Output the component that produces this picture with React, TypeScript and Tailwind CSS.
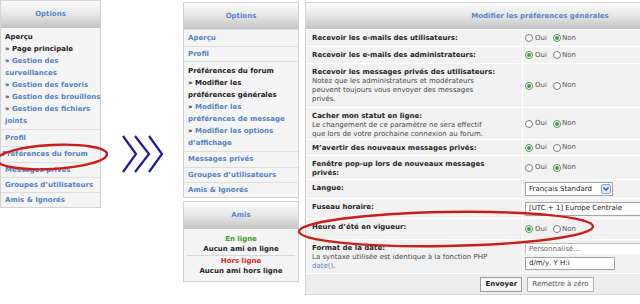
const FONT = "font-['DejaVu_Sans',Verdana,sans-serif]"

const Header = ({ title, className = '' }: { title: string; className?: string }) => (
  <div
    className={`flex items-center justify-center bg-linear-to-b from-[#fbfbfb] via-[#e6e6e6] to-[#c3c3c3] text-[7px] font-bold text-[#5a86c5] ${className}`}
  >
    {title}
  </div>
)

const Radio = ({ checked, className = '' }: { checked?: boolean; className?: string }) => (
  <span
    className={`inline-flex h-[8px] w-[8px] shrink-0 items-center justify-center rounded-full border bg-white ${
      checked ? 'border-[#5c8f5c]' : 'border-[#7d7d7d]'
    } ${className}`}
  >
    {checked && <span className="h-[4px] w-[4px] rounded-full bg-[#3f9f3f]" />}
  </span>
)

const YesNo = ({ yes }: { yes: boolean }) => (
  <div className="flex items-center text-[7px] text-[#555]">
    <Radio checked={yes} />
    <span className="ml-[2px]">Oui</span>
    <Radio checked={!yes} className="ml-[6px]" />
    <span className="ml-[1px]">Non</span>
  </div>
)

const Row = ({
  h,
  label,
  desc,
  children,
}: {
  h: string
  label: string
  desc?: React.ReactNode
  children?: React.ReactNode
}) => (
  <div className={`flex gap-[1px] ${h}`}>
    <div className="w-[216px] shrink-0 bg-[#f1f1f1] px-[6px] pt-[4px] text-[7px] leading-[9px]">
      <div className="font-bold text-[#262626]">{label}</div>
      {desc && <div className="text-[#4a4a4a]">{desc}</div>}
    </div>
    <div className="flex flex-1 items-center bg-[#f1f1f1] pl-[2px]">{children}</div>
  </div>
)

const Item = ({ children, className = '' }: { children: React.ReactNode; className?: string }) => (
  <div
    className={`flex items-center border-t border-[#dedede] bg-[#f4f4f4] px-[4px] font-bold whitespace-nowrap text-[#5682c0] ${className}`}
  >
    {children}
  </div>
)

const Sub = ({ children, dark }: { children: React.ReactNode; dark?: boolean }) => (
  <div className={`whitespace-nowrap ${dark ? 'text-[#222]' : 'text-[#5682c0]'}`}>
    <span className="text-[#333]">»</span> {children}
  </div>
)

export default function App() {
  return (
    <div className={`relative flex h-[304px] w-[640px] overflow-hidden bg-white ${FONT} text-[7px]`}>
      {/* left panel */}
      <div className="w-[101px] shrink-0">
        <div className="overflow-hidden border border-[#d4d4d4] bg-[#f4f4f4]">
          <Header title="Options" className="h-[27px]" />
          <div className="px-[4px] pt-[3px] pb-[2px] font-bold leading-[12px] text-[#5682c0]">
            <div className="text-[#222]">Aperçu</div>
            <Sub dark>Page principale</Sub>
            <Sub>Gestion des</Sub>
            <div>surveillances</div>
            <Sub>Gestion des favoris</Sub>
            <Sub>Gestion des brouillons</Sub>
            <Sub>Gestion des fichiers</Sub>
            <div>joints</div>
          </div>
          <Item className="h-[17px]">Profil</Item>
          <Item className="h-[16px] pl-[1px]">Préférences du forum</Item>
          <Item className="h-[15px]">Messages privés</Item>
          <Item className="h-[15px]">Groupes d’utilisateurs</Item>
          <Item className="h-[15px]">Amis &amp; Ignorés</Item>
        </div>
      </div>

      {/* arrows */}
      <div className="w-[82px] shrink-0">
        <svg className="mt-[135px] ml-[21px]" width="42" height="38" viewBox="0 0 42 38">
          <g fill="none" stroke="#1c1c9e" strokeWidth="2.2" strokeLinejoin="miter">
            <polyline points="1,1 14,19 1,37" />
            <polyline points="13,1 27,19 13,37" />
            <polyline points="27,1 40,19 27,37" />
          </g>
        </svg>
      </div>

      {/* middle column */}
      <div className="w-[116px] shrink-0 pt-[2px]">
        <div className="border border-[#d4d4d4] bg-[#f4f4f4] font-bold">
          <Header title="Options" className="h-[26px]" />
          <Item className="h-[17px]">Aperçu</Item>
          <Item className="h-[15px]">Profil</Item>
          <div className="border-t border-[#dedede] px-[4px] pt-[3px] pb-[2px] leading-[12px] whitespace-nowrap text-[#5682c0]">
            <div className="text-[#222]">Préférences du forum</div>
            <Sub dark>Modifier les</Sub>
            <div className="text-[#222]">préférences générales</div>
            <Sub>Modifier les</Sub>
            <div>préférences de message</div>
            <Sub>Modifier les options</Sub>
            <div>d’affichage</div>
          </div>
          <Item className="h-[16px]">Messages privés</Item>
          <Item className="h-[15px]">Groupes d’utilisateurs</Item>
          <Item className="h-[15px]">Amis &amp; Ignorés</Item>
        </div>

        <div className="mt-[3px] border border-[#d4d4d4] bg-[#f4f4f4] font-bold">
          <Header title="Amis" className="h-[27px] text-[#3f8a3f]" />
          <div className="px-[4px] pt-[5px] text-center leading-[10px]">
            <div className="text-[#3a9a2a]">En ligne</div>
            <div className="text-[#1e1e1e]">Aucun ami en ligne</div>
          </div>
          <div className="mx-[3px] mt-[1px] border-t border-[#d8d8d8]" />
          <div className="px-[4px] pb-[5px] text-center leading-[10px]">
            <div className="text-[#e02424]">Hors ligne</div>
            <div className="text-[#1e1e1e]">Aucun ami hors ligne</div>
          </div>
        </div>
      </div>

      {/* right panel */}
      <div className="ml-[6px] w-[470px] shrink-0 pt-[2px]">
        <div className="flex flex-col gap-[1px] border border-[#d4d4d4] bg-white">
          <Header title="Modifier les préférences générales" className="h-[26px]" />
          <Row h="h-[16px]" label="Recevoir les e-mails des utilisateurs:">
            <YesNo yes={false} />
          </Row>
          <Row h="h-[16px]" label="Recevoir les e-mails des administrateurs:">
            <YesNo yes />
          </Row>
          <Row
            h="h-[43px]"
            label="Recevoir les messages privés des utilisateurs:"
            desc={
              <>
                Notez que les administrateurs et modérateurs
                <br />
                peuvent toujours vous envoyer des messages
                <br />
                privés.
              </>
            }
          >
            <YesNo yes />
          </Row>
          <Row
            h="h-[31px]"
            label="Cacher mon statut en ligne:"
            desc={
              <>
                Le changement de ce paramètre ne sera effectif
                <br />
                que lors de votre prochaine connexion au forum.
              </>
            }
          >
            <YesNo yes={false} />
          </Row>
          <Row h="h-[15px]" label="M’avertir des nouveaux messages privés:">
            <YesNo yes />
          </Row>
          <Row
            h="h-[23px]"
            label="Fenêtre pop-up lors de nouveaux messages"
            desc={<span className="font-bold text-[#262626]">privés:</span>}
          >
            <YesNo yes={false} />
          </Row>
          <Row h="h-[18px]" label="Langue:">
            <div className="flex h-[14px] w-[88px] items-center justify-between border border-[#a5a5a5] bg-white pl-[3px] pr-[1px] text-[7px] text-[#222]">
              <span>Français Standard</span>
              <span className="flex h-[10px] w-[10px] items-center justify-center rounded-[2px] border border-[#8ba6d6] bg-[#dbe6f8]">
                <svg width="6" height="4" viewBox="0 0 6 4">
                  <polyline points="0.5,0.5 3,3 5.5,0.5" fill="none" stroke="#2d4f9e" strokeWidth="1.3" />
                </svg>
              </span>
            </div>
          </Row>
          <Row h="h-[19px]" label="Fuseau horaire:">
            <div className="flex h-[14px] w-[140px] items-center border border-[#a5a5a5] bg-white pl-[3px] text-[7px] whitespace-nowrap text-[#222]">
              [UTC + 1] Europe Centrale
            </div>
          </Row>
          <Row h="h-[20px]" label="Heure d’été en vigueur:">
            <YesNo yes />
          </Row>
          <Row
            h="h-[33px]"
            label="Format de la date:"
            desc={
              <>
                La syntaxe utilisée est identique à la fonction PHP
                <br />
                <span className="text-[#5682c0]">date()</span>.
              </>
            }
          >
            <div className="flex flex-col gap-[3px]">
              <div className="flex h-[11px] w-[140px] items-center border-t border-l border-[#bdbdbd] bg-white pl-[3px] text-[7px] text-[#666]">
                Personnalisé...
              </div>
              <div className="flex h-[13px] w-[90px] items-center border border-[#a5a5a5] bg-white pl-[3px] text-[7px] text-[#222]">
                d/m/y, Y H:i
              </div>
            </div>
          </Row>
          <div className="flex h-[20px] items-center justify-center gap-[5px] bg-[#ededed] pr-[6px]">
            <button className="h-[15px] border border-[#9d9d9d] bg-[#f6f6f6] px-[4px] text-[7px] font-bold text-[#222]">
              Envoyer
            </button>
            <button className="h-[15px] border border-[#b3b3b3] bg-[#f8f8f8] px-[4px] text-[7px] text-[#555]">
              Remettre à zéro
            </button>
          </div>
        </div>
      </div>

      {/* red marks */}
      <svg className="pointer-events-none absolute top-0 left-0" width="640" height="304" viewBox="0 0 640 304">
        <g fill="none" stroke="#c81e1e" strokeWidth="2.4">
          <ellipse cx="52" cy="157" rx="55" ry="12" transform="rotate(-3 52 157)" />
          <ellipse cx="446" cy="229" rx="147" ry="17" transform="rotate(-1 446 229)" />
        </g>
      </svg>
    </div>
  )
}
